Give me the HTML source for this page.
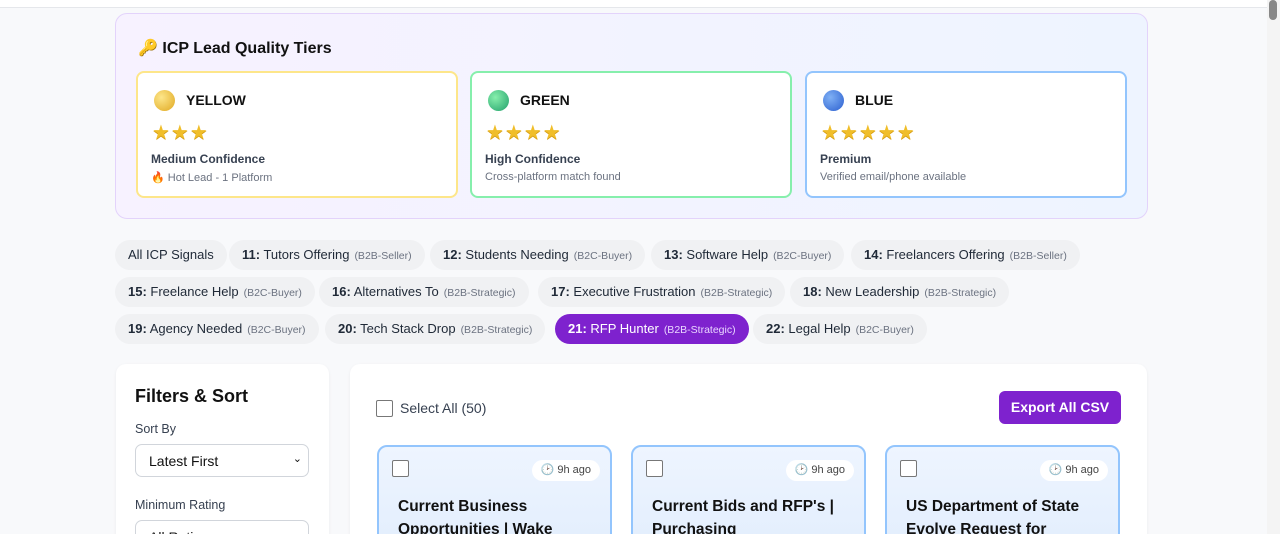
<!DOCTYPE html>
<html><head><meta charset="utf-8"><style>
*{box-sizing:border-box;margin:0;padding:0}
html,body{width:1280px;height:534px;overflow:hidden}
body{background:#f8f9fb;font-family:"Liberation Sans",sans-serif;color:#1f2937;position:relative}
.abs{position:absolute}
.topbar{left:0;top:0;width:1267px;height:8px;background:#fff;border-bottom:1px solid #e5e7eb}
.sb{left:1267px;top:0;width:13px;height:534px;background:#f4f4f4}
.sb i{position:absolute;left:2px;top:0;width:8px;height:20px;background:#888;border-radius:4px}
.tier{left:115px;top:13px;width:1033px;height:206px;border:1.5px solid #e3d3fb;border-radius:12px;background:linear-gradient(90deg,#f7f2ff,#eef4ff)}
.tier h2{position:absolute;left:22px;top:24px;font-size:16px;font-weight:700;color:#111}
.card{top:57px;width:322px;height:127px;background:#fff;border-radius:8px;border:2px solid}
.card .ball{position:absolute;left:16px;top:17px;width:21px;height:21px;border-radius:50%}
.card .nm{position:absolute;left:48px;top:19px;font-size:14px;font-weight:700;color:#111}
.card .st{position:absolute;left:14px;top:47px;font-size:20px;color:#f0be2a;letter-spacing:1px;text-shadow:0 1px 0 #d49a10}
.card .cf{position:absolute;left:13px;top:79px;font-size:12px;font-weight:700;color:#374151}
.card .sub{position:absolute;left:13px;top:98px;font-size:11px;color:#6b7280}
.chip{position:absolute;height:30px;border-radius:15px;background:#f0f1f3;font-size:13px;color:#1f2937;line-height:30px;padding:0 13px;white-space:nowrap}
.chip b{font-weight:700}
.chip small{font-size:10.5px;color:#6b7280;margin-left:5px}
.chip.on{background:#7e22ce;color:#fff}
.chip.on small{color:#e9d5ff}
.panel{background:#fff;border-radius:10px;box-shadow:0 1px 3px rgba(0,0,0,.06)}
.sel{position:absolute;left:19px;width:174px;height:33px;border:1px solid #d1d5db;border-radius:7px;font-size:14px;padding:8px 13px;color:#111}
.lc{position:absolute;top:81px;width:235px;height:100px;border:2px solid #93c5fd;border-radius:10px;background:linear-gradient(180deg,#eef5ff,#e3eefd)}
.lc .cb{position:absolute;left:13px;top:13px;width:17px;height:17px;border:1.5px solid #777;border-radius:2px;background:#fff}
.lc .ago{position:absolute;right:10px;top:13px;height:21px;padding:0 9px;border-radius:11px;background:#fff;font-size:11px;line-height:21px;color:#444}
.lc .t{position:absolute;left:19px;top:48px;font-size:15.5px;font-weight:700;color:#111;line-height:23px;width:210px}
</style></head><body>
<div class="abs topbar"></div>
<div class="abs tier">
<h2><span style="color:#f59e0b">🔑</span> ICP Lead Quality Tiers</h2>
<div class="abs card" style="left:20px;border-color:#fde68a">
<div class="ball" style="background:radial-gradient(circle at 35% 35%,#fde68a,#e0a820)"></div><div class="nm">YELLOW</div>
<div class="st">★★★</div><div class="cf">Medium Confidence</div><div class="sub"><span style="color:#f97316">🔥</span> Hot Lead - 1 Platform</div></div>
<div class="abs card" style="left:354px;border-color:#86efac">
<div class="ball" style="background:radial-gradient(circle at 35% 35%,#86efac,#22a06b)"></div><div class="nm">GREEN</div>
<div class="st">★★★★</div><div class="cf">High Confidence</div><div class="sub">Cross-platform match found</div></div>
<div class="abs card" style="left:689px;border-color:#93c5fd">
<div class="ball" style="background:radial-gradient(circle at 35% 35%,#7fb0f5,#2b5fcf)"></div><div class="nm">BLUE</div>
<div class="st">★★★★★</div><div class="cf">Premium</div><div class="sub">Verified email/phone available</div></div>
</div>

<div class="chip" style="left:115px;top:240px">All ICP Signals</div>
<div class="chip" style="left:229px;top:240px"><b>11:</b> Tutors Offering<small>(B2B-Seller)</small></div>
<div class="chip" style="left:430px;top:240px"><b>12:</b> Students Needing<small>(B2C-Buyer)</small></div>
<div class="chip" style="left:651px;top:240px"><b>13:</b> Software Help<small>(B2C-Buyer)</small></div>
<div class="chip" style="left:851px;top:240px"><b>14:</b> Freelancers Offering<small>(B2B-Seller)</small></div>
<div class="chip" style="left:115px;top:277px"><b>15:</b> Freelance Help<small>(B2C-Buyer)</small></div>
<div class="chip" style="left:319px;top:277px"><b>16:</b> Alternatives To<small>(B2B-Strategic)</small></div>
<div class="chip" style="left:538px;top:277px"><b>17:</b> Executive Frustration<small>(B2B-Strategic)</small></div>
<div class="chip" style="left:790px;top:277px"><b>18:</b> New Leadership<small>(B2B-Strategic)</small></div>
<div class="chip" style="left:115px;top:314px"><b>19:</b> Agency Needed<small>(B2C-Buyer)</small></div>
<div class="chip" style="left:325px;top:314px"><b>20:</b> Tech Stack Drop<small>(B2B-Strategic)</small></div>
<div class="chip on" style="left:555px;top:314px"><b>21:</b> RFP Hunter<small>(B2B-Strategic)</small></div>
<div class="chip" style="left:753px;top:314px"><b>22:</b> Legal Help<small>(B2C-Buyer)</small></div>

<div class="abs panel" style="left:116px;top:364px;width:213px;height:190px">
<div class="abs" style="left:19px;top:22px;font-size:18px;font-weight:700;color:#111">Filters &amp; Sort</div>
<div class="abs" style="left:19px;top:58px;font-size:12.5px;color:#374151">Sort By</div>
<div class="sel" style="top:80px">Latest First<span style="position:absolute;right:6px;top:7px;font-size:11px">⌄</span></div>
<div class="abs" style="left:19px;top:134px;font-size:12.5px;color:#374151">Minimum Rating</div>
<div class="sel" style="top:156px">All Ratings</div>
</div>

<div class="abs panel" style="left:350px;top:364px;width:797px;height:190px">
<div class="abs" style="left:26px;top:36px;width:17px;height:17px;border:1.5px solid #777;border-radius:2px"></div>
<div class="abs" style="left:50px;top:36px;font-size:14px;color:#374151">Select All (50)</div>
<div class="abs" style="left:649px;top:27px;width:122px;height:33px;border-radius:6px;background:#7e22ce;color:#fff;font-size:14px;font-weight:700;text-align:center;line-height:33px">Export All CSV</div>
<div class="lc" style="left:27px"><div class="cb"></div><div class="ago">🕑 9h ago</div><div class="t">Current Business Opportunities | Wake</div></div>
<div class="lc" style="left:281px"><div class="cb"></div><div class="ago">🕑 9h ago</div><div class="t">Current Bids and RFP's | Purchasing</div></div>
<div class="lc" style="left:535px"><div class="cb"></div><div class="ago">🕑 9h ago</div><div class="t">US Department of State Evolve Request for</div></div>
</div>
<div class="abs sb"><i></i></div>
</body></html>
